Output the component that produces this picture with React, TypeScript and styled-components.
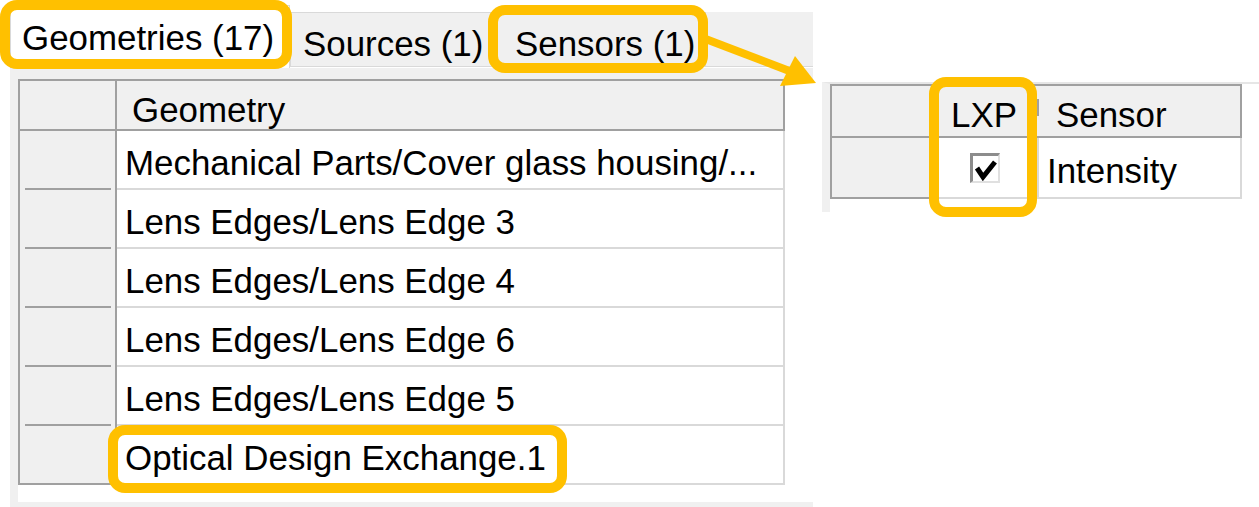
import React from "react";
import styled, { createGlobalStyle } from "styled-components";

const YELLOW = "#ffc000";
const DARK = "#a0a0a0";
const LIGHT = "#d9d9d9";
const PANEL = "#f0f0f0";

const GlobalStyle = createGlobalStyle`
  html, body {
    margin: 0;
    padding: 0;
    background: #ffffff;
  }
  * {
    box-sizing: border-box;
  }
`;

const geometries = [
  "Mechanical Parts/Cover glass housing/...",
  "Lens Edges/Lens Edge 3",
  "Lens Edges/Lens Edge 4",
  "Lens Edges/Lens Edge 6",
  "Lens Edges/Lens Edge 5",
  "Optical Design Exchange.1",
];

const Page = styled.div`
  position: relative;
  width: 1259px;
  height: 507px;
  overflow: hidden;
  display: flex;
  font-family: "Liberation Sans", Arial, sans-serif;
  font-size: 34.9px;
  color: #000;
  background: #fff;
`;

const LeftArea = styled.div`
  width: 813px;
  display: flex;
  flex-direction: column;
`;

const TabStrip = styled.div`
  height: 68px;
  display: flex;
  align-items: flex-end;
  padding-left: 10px;
`;

const Tab = styled.div<{ $w: number; $pad: number; $selected?: boolean }>`
  width: ${(p) => p.$w}px;
  height: ${(p) => (p.$selected ? 63 : 55)}px;
  padding-left: ${(p) => p.$pad}px;
  padding-top: ${(p) => (p.$selected ? 1 : 8)}px;
  display: flex;
  align-items: center;
  white-space: nowrap;
  background: ${(p) => (p.$selected ? "#fff" : PANEL)};
  border: 1px solid ${LIGHT};
  border-bottom: ${(p) => (p.$selected ? "none" : `1px solid ${LIGHT}`)};
  margin-bottom: ${(p) => (p.$selected ? 0 : 1)}px;
`;

const TabFiller = styled.div`
  flex: 1;
  height: 55px;
  margin-bottom: 1px;
  background: ${PANEL};
  border-bottom: 1px solid ${LIGHT};
`;

const TabPage = styled.div`
  flex: 1;
  margin-left: 10px;
  background: #fff;
  border-left: 8px solid ${PANEL};
  border-top: 11px solid ${PANEL};
  border-bottom: 5px solid ${PANEL};
`;

const Grid = styled.div<{ $cols: string }>`
  display: grid;
  grid-template-columns: ${(p) => p.$cols};
  width: max-content;
  border-top: 2px solid ${DARK};
  border-left: 2px solid ${DARK};
`;

const HeaderCell = styled.div<{ $h: number; $pt: number; $pl?: number; $divider?: boolean }>`
  height: ${(p) => p.$h}px;
  padding: ${(p) => p.$pt}px 0 0 ${(p) => p.$pl ?? 15}px;
  display: flex;
  align-items: center;
  white-space: nowrap;
  background-color: ${PANEL};
  border-bottom: 2px solid ${DARK};
  border-right: ${(p) => (p.$divider ? "none" : `2px solid ${DARK}`)};
  background-image: ${(p) =>
    p.$divider ? `linear-gradient(${DARK}, ${DARK})` : "none"};
  background-size: 3px 34%;
  background-position: 100% 38%;
  background-repeat: no-repeat;
`;

const RowHeader = styled.div<{ $h: number; $last?: boolean }>`
  height: ${(p) => p.$h}px;
  background-color: ${PANEL};
  border-right: 2px solid ${DARK};
  border-bottom: ${(p) => (p.$last ? `2px solid ${DARK}` : "none")};
  background-image: ${(p) =>
    p.$last ? "none" : `linear-gradient(${DARK}, ${DARK})`};
  background-size: calc(100% - 9px) 2px;
  background-position: 5px 100%;
  background-repeat: no-repeat;
`;

const DataCell = styled.div<{ $h: number; $center?: boolean }>`
  height: ${(p) => p.$h}px;
  padding: 7px 0 0 8px;
  display: flex;
  align-items: center;
  justify-content: ${(p) => (p.$center ? "center" : "flex-start")};
  white-space: nowrap;
  overflow: hidden;
  background: #fff;
  border-right: 2px solid ${LIGHT};
  border-bottom: 2px solid ${LIGHT};
`;

const RightArea = styled.div`
  flex: 1;
  padding: 82px 0 0 9px;
`;

const SensorPanel = styled.div`
  height: 130px;
  background: #fff;
  border-left: 8px solid ${PANEL};
  border-top: 2px solid #e6e6e6;
`;

const CheckBox = styled.span`
  width: 30px;
  height: 30px;
  margin: 0 12px 6px 0;
  display: inline-flex;
  background: #fff;
  border-top: 3px solid #8c8c8c;
  border-left: 3px solid #8c8c8c;
  border-right: 2px solid #e0e0e0;
  border-bottom: 2px solid #e0e0e0;
`;

const Highlight = styled.div<{ $x: number; $y: number; $w: number; $h: number }>`
  position: absolute;
  left: ${(p) => p.$x}px;
  top: ${(p) => p.$y}px;
  width: ${(p) => p.$w}px;
  height: ${(p) => p.$h}px;
  border: 10px solid ${YELLOW};
  border-radius: 17px;
  pointer-events: none;
`;

const Overlay = styled.svg`
  position: absolute;
  left: 0;
  top: 0;
  pointer-events: none;
`;

export default function App() {
  return (
    <Page>
      <GlobalStyle />
      <LeftArea>
        <TabStrip>
          <Tab $w={280} $pad={11} $selected>
            Geometries (17)
          </Tab>
          <Tab $w={207} $pad={12}>
            Sources (1)
          </Tab>
          <Tab $w={209} $pad={17}>
            Sensors (1)
          </Tab>
          <TabFiller />
        </TabStrip>
        <TabPage>
          <Grid $cols="97px 668px">
            <HeaderCell $h={50} $pt={10} />
            <HeaderCell $h={50} $pt={10}>
              Geometry
            </HeaderCell>
            {geometries.map((g, i) => (
              <React.Fragment key={g}>
                <RowHeader $h={59} $last={i === geometries.length - 1} />
                <DataCell $h={59}>{g}</DataCell>
              </React.Fragment>
            ))}
          </Grid>
        </TabPage>
      </LeftArea>

      <RightArea>
        <SensorPanel>
          <Grid $cols="104px 103px 203px">
            <HeaderCell $h={52} $pt={8} />
            <HeaderCell $h={52} $pt={8} $divider>
              LXP
            </HeaderCell>
            <HeaderCell $h={52} $pt={8} $pl={17}>
              Sensor
            </HeaderCell>
            <RowHeader $h={61} $last />
            <DataCell $h={61} $center>
              <CheckBox>
                <svg width="25" height="25" viewBox="0 0 25 25">
                  <polyline
                    points="4,12 10,21 22,6"
                    fill="none"
                    stroke="#000"
                    strokeWidth="5"
                  />
                </svg>
              </CheckBox>
            </DataCell>
            <DataCell $h={61}>Intensity</DataCell>
          </Grid>
        </SensorPanel>
      </RightArea>

      <Highlight $x={0} $y={0} $w={292} $h={69} />
      <Highlight $x={488} $y={5} $w={220} $h={68} />
      <Highlight $x={929} $y={77} $w={108} $h={140} />
      <Highlight $x={108} $y={425} $w={459} $h={68} />

      <Overlay width="1259" height="507" viewBox="0 0 1259 507">
        <line x1="703" y1="38" x2="792" y2="72" stroke={YELLOW} strokeWidth="8" />
        <polygon points="780,86 795,56 816,83" fill={YELLOW} />
      </Overlay>
    </Page>
  );
}
